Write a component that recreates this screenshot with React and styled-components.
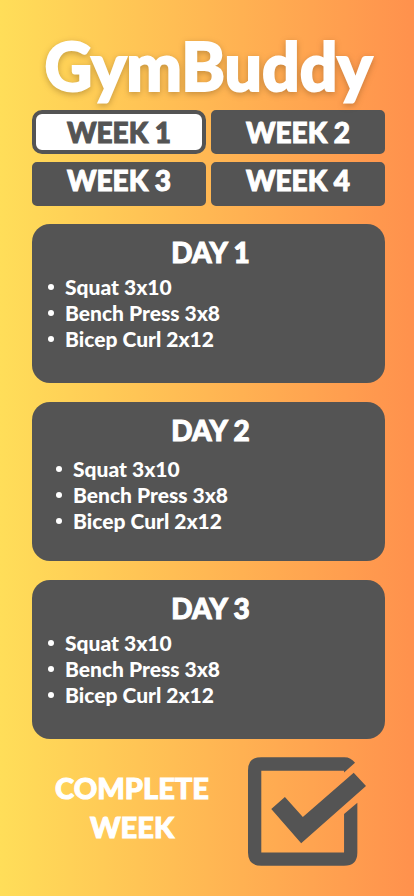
import React, { useState } from "react";
import styled, { createGlobalStyle } from "styled-components";

const GlobalStyle = createGlobalStyle`
  * { box-sizing: border-box; }
  body { margin: 0; }
  button, input { font: inherit; }
`;

const Page = styled.main`
  min-height: 100vh;
  padding: 29px 29px 28px 32px;
  background: linear-gradient(90deg, #ffde59, #ff914d);
  color: #fff;
  font-family: Lato, "Open Sans", sans-serif;
  font-weight: 900;
`;

const Title = styled.h1`
  margin: 0;
  height: 81px;
  font-size: 66px;
  line-height: 74px;
  font-weight: 900;
  text-align: center;
  white-space: nowrap;
  -webkit-text-stroke: 2px #fff;
  filter: drop-shadow(0 2px 3px rgba(90, 60, 20, 0.35));
`;

const Weeks = styled.nav`
  display: grid;
  grid-template-columns: 1fr 1fr;
  gap: 8px 5px;
`;

const WeekButton = styled.button`
  height: 44px;
  padding: 0;
  border: 4px solid #545454;
  border-radius: ${(p) => (p.$active ? 10 : 5)}px;
  background: ${(p) => (p.$active ? "#fff" : "#545454")};
  color: ${(p) => (p.$active ? "#545454" : "#fff")};
  font-size: 28px;
  line-height: 36px;
  font-weight: 900;
  -webkit-text-stroke: 1px currentColor;
  cursor: pointer;
  ${(p) => p.$raised && "padding-bottom: 8px; line-height: 28px;"}
`;

const Days = styled.div`
  display: grid;
  gap: 19px;
  margin-top: 18px;
`;

const DayCard = styled.section`
  min-height: 159px;
  padding: 10px 16px 24px;
  border-radius: 18px;
  background: #545454;
`;

const DayTitle = styled.h2`
  margin: 0;
  padding-left: 4px;
  font-size: 28px;
  line-height: 36px;
  font-weight: 900;
  text-align: center;
  -webkit-text-stroke: 1px currentColor;
`;

const Exercises = styled.ul`
  margin: 0;
  padding: ${(p) => (p.$inset ? "8px 0 0 8px" : "4px 0 0")};
  list-style: none;
`;

const Exercise = styled.li`
  display: flex;
  align-items: center;
  gap: 11px;
  font-size: 21px;
  line-height: 26px;

  &::before {
    content: "";
    width: 6px;
    height: 6px;
    border-radius: 50%;
    background: #fff;
  }
`;

const Complete = styled.label`
  display: flex;
  align-items: flex-start;
  justify-content: space-between;
  margin-top: 18px;
  padding: 0 19px 0 20px;
  cursor: pointer;
`;

const CompleteText = styled.span`
  width: 160px;
  padding-top: 11px;
  font-size: 29px;
  line-height: 39px;
  text-align: center;
  -webkit-text-stroke: 1px currentColor;
`;

const CheckFrame = styled.span`
  position: relative;
  display: block;
  width: 118px;
  height: 109px;
`;

const CheckInput = styled.input`
  position: absolute;
  inset: 0;
  width: 100%;
  height: 100%;
  margin: 0;
  opacity: 0;
  cursor: pointer;
`;

const CheckDrawing = styled.svg`
  display: block;
  width: 100%;
  height: 100%;
  fill: #545454;
`;

const weeks = [1, 2, 3, 4];
const exercises = ["Squat 3x10", "Bench Press 3x8", "Bicep Curl 2x12"];
const days = [
  { number: 1, inset: false },
  { number: 2, inset: true },
  { number: 3, inset: false },
];

export default function App() {
  const [week, setWeek] = useState(1);
  const [done, setDone] = useState(true);

  return (
    <Page>
      <GlobalStyle />
      <Title>GymBuddy</Title>
      <Weeks aria-label="Weeks">
        {weeks.map((n) => (
          <WeekButton
            key={n}
            type="button"
            $active={n === week}
            $raised={n > 2}
            aria-pressed={n === week}
            onClick={() => setWeek(n)}
          >
            WEEK {n}
          </WeekButton>
        ))}
      </Weeks>
      <Days>
        {days.map((day) => (
          <DayCard key={day.number}>
            <DayTitle>DAY {day.number}</DayTitle>
            <Exercises $inset={day.inset}>
              {exercises.map((name) => (
                <Exercise key={name}>{name}</Exercise>
              ))}
            </Exercises>
          </DayCard>
        ))}
      </Days>
      <Complete>
        <CompleteText>COMPLETE WEEK</CompleteText>
        <CheckFrame>
          <CheckInput
            type="checkbox"
            checked={done}
            onChange={(e) => setDone(e.target.checked)}
          />
          <CheckDrawing viewBox="52 50 355 327" aria-hidden="true">
            <path d="M341 96 374 67Q362 50 342 50H92Q52 50 52 90V337Q52 377 92 377H341Q381 377 381 337V187L341 221V337H92V91H341Z" />
            {done && <path d="M122 206 163 170 217 230 370 97 407 137 212 309Z" />}
          </CheckDrawing>
        </CheckFrame>
      </Complete>
    </Page>
  );
}
